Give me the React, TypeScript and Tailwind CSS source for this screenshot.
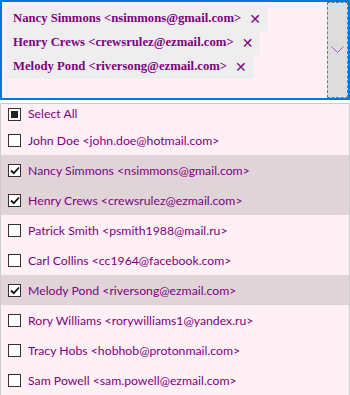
import React from 'react';

interface Person {
    name: string;
    email: string;
    selected: boolean;
}

const people: Person[] = [
    { name: 'John Doe', email: 'john.doe@hotmail.com', selected: false },
    { name: 'Nancy Simmons', email: 'nsimmons@gmail.com', selected: true },
    { name: 'Henry Crews', email: 'crewsrulez@ezmail.com', selected: true },
    { name: 'Patrick Smith', email: 'psmith1988@mail.ru', selected: false },
    { name: 'Carl Collins', email: 'cc1964@facebook.com', selected: false },
    { name: 'Melody Pond', email: 'riversong@ezmail.com', selected: true },
    { name: 'Rory Williams', email: 'rorywilliams1@yandex.ru', selected: false },
    { name: 'Tracy Hobs', email: 'hobhob@protonmail.com', selected: false },
    { name: 'Sam Powell', email: 'sam.powell@ezmail.com', selected: false },
];

const label = (p: Person) => `${p.name} <${p.email}>`;

const CheckBox = ({ state }: { state: 'on' | 'off' | 'mixed' }) => (
    <span className="flex h-[13px] w-[13px] shrink-0 items-center justify-center border border-[#333] bg-white">
        {state === 'mixed' && <span className="h-[7px] w-[7px] bg-[#222]" />}
        {state === 'on' && (
            <svg width="10" height="9" viewBox="0 0 10 9">
                <path d="M1 4.5 L3.8 7.2 L9 1.5" fill="none" stroke="#111" strokeWidth="1.8" />
            </svg>
        )}
    </span>
);

export default function App() {
    const chosen = people.filter(p => p.selected);

    return (
        <div className="w-[350px] h-[395px] overflow-hidden bg-white">
            {/* input with tags */}
            <div className="flex h-[100px] border-2 border-[#0078d7] bg-[#fff0f5]">
                <div className="flex flex-1 flex-col items-start px-[5px] pt-[5px]">
                    {chosen.map(p => (
                        <div
                            key={p.email}
                            className="flex h-[24px] items-center bg-[#eeeeee] pl-[6px] pr-[7px] text-[12.7px] font-bold text-[#800080]"
                            style={{ fontFamily: '"Liberation Serif", serif' }}
                        >
                            <span>{label(p)}</span>
                            <span className="ml-[8px] text-[14px] font-normal" style={{ fontFamily: '"DejaVu Sans", sans-serif' }}>✕</span>
                        </div>
                    ))}
                </div>
                <div className="flex w-[21px] items-center justify-center border border-dashed border-[#777] bg-[#dddddd]">
                    <svg width="13" height="8" viewBox="0 0 13 8">
                        <path d="M0.5 0.5 L6.5 6.5 L12.5 0.5" fill="none" stroke="#a35ab8" strokeWidth="1" />
                    </svg>
                </div>
            </div>

            {/* dropdown list */}
            <div
                className="mt-[3px] border border-[#cccccc] bg-[#fff0f5] text-[12.25px] text-[#800080]"
                style={{ fontFamily: 'Lato, sans-serif' }}
            >
                <div className="flex h-[21px] items-center gap-[7px] pl-[7px]">
                    <CheckBox state="mixed" />
                    <span>Select All</span>
                </div>
                {people.map(p => (
                    <div
                        key={p.email}
                        className={`flex h-[30px] items-center gap-[7px] pl-[7px] ${p.selected ? 'bg-[#e0d4d9]' : ''}`}
                    >
                        <CheckBox state={p.selected ? 'on' : 'off'} />
                        <span className="pt-[2px]">{label(p)}</span>
                    </div>
                ))}
            </div>
        </div>
    );
}
